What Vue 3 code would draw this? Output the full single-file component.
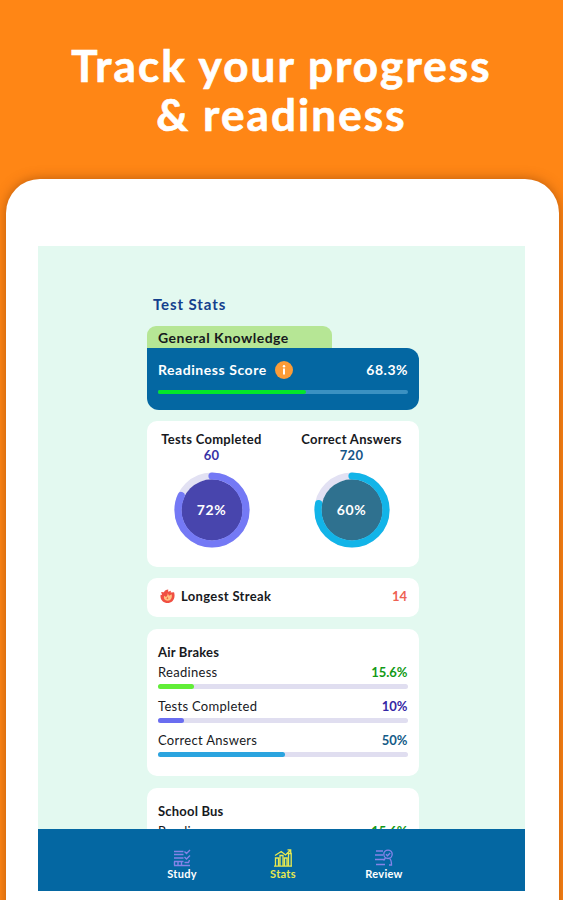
<template>
  <div class="page">
    <h1 class="headline">Track your progress<br />&amp; readiness</h1>
    <div class="device">
      <div class="screen">
        <main class="content">
          <h2 class="title">Test Stats</h2>
          <div class="tab">General Knowledge</div>
          <section class="score">
            <div class="row score-row">
              <span class="score-label">Readiness Score</span>
              <svg class="info" viewBox="0 0 18 18">
                <circle cx="9" cy="9" r="9" fill="#fb9c38" />
                <circle cx="9" cy="5.2" r="1.2" fill="#fff" />
                <path d="M9 7.6v5.9" stroke="#fff" stroke-width="2" />
              </svg>
              <span class="score-value">68.3%</span>
            </div>
            <div class="track track-score">
              <div class="fill" :style="{ width: '59%', background: '#04e52a' }"></div>
            </div>
          </section>

          <section class="card rings">
            <div v-for="ring in rings" :key="ring.label" class="ring">
              <span class="ring-label">{{ ring.label }}</span>
              <span class="ring-count" :style="{ color: ring.countColor }">{{ ring.count }}</span>
              <div class="dial">
                <svg viewBox="0 0 76 76">
                  <circle cx="38" cy="38" r="34" fill="none" stroke="#e2e1f3" stroke-width="7" />
                  <circle cx="38" cy="38" r="30.7" :fill="ring.inner" />
                  <circle
                    cx="38" cy="38" r="34" fill="none" pathLength="100"
                    :stroke="ring.outer" stroke-width="7.2" stroke-linecap="round"
                    :stroke-dasharray="ring.arc + ' 100'" transform="rotate(-90 38 38)"
                  />
                </svg>
                <span class="dial-text">{{ ring.percent }}</span>
              </div>
            </div>
          </section>

          <section class="card streak">
            <svg class="flame" viewBox="0 0 16 16">
              <path d="M1.2 3.2 4.2 3.4C5 1.8 6.6.8 8.8.6L8.6 3l3-1.2-.2 1.9 3.6-.3c1.2 4.2.3 7.6-1.8 9.6-2.8 2.6-7.6 2.6-10.4 0C.8 11.100.1 8.500.7 6l1.500.3z" fill="#f04f42" />
              <path d="M8.200 4.300 9.600 7.200 12.400 5.600c1 3.800-.8 6.900-4.200 6.900-3.200 0-4.700-2.500-3.700-5.300l1.800 1.300C7.700 7.700 8.300 6 8.200 4.300z" fill="#ffc07f" />
              <path d="m8 8 .9 2.100c-.2 1-1.500 1.200-2 .4z" fill="#f36a45" />
            </svg>
            <span class="streak-label">Longest Streak</span>
            <span class="streak-value">14</span>
          </section>

          <section v-for="topic in topics" :key="topic.name" class="card topic">
            <h3 class="topic-name">{{ topic.name }}</h3>
            <div v-for="item in topic.items" :key="item.label" class="metric">
              <div class="row metric-row">
                <span class="metric-label">{{ item.label }}</span>
                <span class="metric-value" :style="{ color: item.color }">{{ item.value }}</span>
              </div>
              <div class="track">
                <div class="fill" :style="{ width: item.width + '%', background: item.bar }"></div>
              </div>
            </div>
          </section>
        </main>

        <nav class="nav">
          <a class="nav-item">
            <svg viewBox="0 0 18 18" fill="none" stroke="#8583e8" stroke-width="1.4">
              <path d="M1 2.500h9.500M1 5.500h9.500M1 9h9.500M1 12.500h9.500M1 16.500h16M1.500 12.500v4M5 12.500v4M8.500 12.500v4M11.500 2.500l2 2L17 1M11.500 8l2 2L17 6.500M11.500 13.500h4l1-2.500" />
            </svg>
            <span>Study</span>
          </a>
          <a class="nav-item active">
            <svg viewBox="0 0 18 18" fill="none" stroke="#e9e94f" stroke-width="1.3">
              <path d="M0 17.2h18M1.5 17V9h3v8M6 17V6.5h3V17M10.5 17V9h2.5v8M14.5 17V4.5h2.7V17M1 6.5 7.2 2.5 11.5 6 16.5 1M13.5.8h3.2v3" />
            </svg>
            <span>Stats</span>
          </a>
          <a class="nav-item">
            <svg viewBox="0 0 18 18" fill="none" stroke="#8583e8" stroke-width="1.3">
              <path d="M1 2h7M0 6h8M0 10.5h10M1 15.500h9M10.500 9 8.500 11.500M14.500 9.500c1.500 1 2 2.500 2 6.500h-2.500" />
              <circle cx="13" cy="5.300" r="4.200" />
              <path d="m11 5.200 1.500 1.600L15.200 4" />
            </svg>
            <span>Review</span>
          </a>
        </nav>
      </div>
    </div>
  </div>
</template>

<script setup>
const rings = [
  { label: 'Tests Completed', count: 60, percent: '72%', arc: 82, outer: '#7479f5', inner: '#4845ad', countColor: '#3731a5' },
  { label: 'Correct Answers', count: 720, percent: '60%', arc: 78, outer: '#12b4e8', inner: '#2f718f', countColor: '#165587' }
];

const metrics = [
  { label: 'Readiness', value: '15.6%', width: 14.5, color: '#129a16', bar: '#61ee37' },
  { label: 'Tests Completed', value: '10%', width: 10.3, color: '#3527a5', bar: '#6a6df0' },
  { label: 'Correct Answers', value: '50%', width: 51, color: '#145b87', bar: '#2ba4df' }
];

const topics = [
  { name: 'Air Brakes', items: metrics },
  { name: 'School Bus', items: metrics.slice(0, 1) }
];
</script>

<style>
body {
  margin: 0;
}
</style>

<style scoped>
.page {
  height: 900px;
  overflow: hidden;
  background: #ff8615;
  font-family: Lato, "Open Sans", sans-serif;
  color: #17191d;
}

.headline {
  margin: 0;
  height: 138px;
  padding-top: 41px;
  text-align: center;
  font-size: 44px;
  line-height: 49px;
  font-weight: 700;
  letter-spacing: 2.1px;
  color: #fff;
  -webkit-text-stroke: 0.7px #fff;
}

.device {
  box-sizing: border-box;
  height: 760px;
  margin: 0 4px 0 5.5px;
  padding: 67px 34px 0 32.5px;
  border-radius: 34px 34px 0 0;
  background: #fff;
  box-shadow: 0 0 12px rgba(120, 50, 0, 0.5);
}

.screen {
  display: flex;
  flex-direction: column;
  height: 645px;
  overflow: hidden;
  background: #e3f9f0;
}

.content {
  flex: 1;
  min-height: 0;
  overflow: hidden;
  width: 272px;
  padding: 47px 0 0 109px;
}

.title {
  margin: 0 0 10.5px 6px;
  font-size: 15px;
  line-height: 22px;
  font-weight: 700;
  letter-spacing: 0.9px;
  color: #13408d;
}

.tab {
  box-sizing: border-box;
  width: 185px;
  height: 22.5px;
  padding-left: 11px;
  border-radius: 9px 9px 0 0;
  background: #b6e695;
  font-size: 14px;
  line-height: 24px;
  font-weight: 700;
  letter-spacing: 0.5px;
}

.score {
  box-sizing: border-box;
  height: 62px;
  margin-bottom: 11px;
  padding: 12px 11px 0;
  border-radius: 0 12px 12px 12px;
  background: #0467a2;
  color: #fff;
}

.row {
  display: flex;
  align-items: center;
}

.score-row {
  height: 19px;
  font-size: 14px;
  font-weight: 700;
}

.score-label {
  letter-spacing: 0.55px;
}

.info {
  width: 18px;
  height: 18px;
  margin-left: 8.5px;
}

.score-value {
  margin-left: auto;
  letter-spacing: 0.5px;
}

.track {
  height: 4.5px;
  border-radius: 3px;
  background: #e0def0;
}

.track-score {
  height: 4px;
  margin-top: 11px;
  background: #3b91c2;
}

.fill {
  height: 100%;
  border-radius: 3px;
}

.card {
  box-sizing: border-box;
  border-radius: 10px;
  background: #fff;
}

.rings {
  display: flex;
  justify-content: space-between;
  height: 145.5px;
  margin-bottom: 11.5px;
  padding: 10px 12px 0 9px;
}

.ring {
  display: flex;
  flex-direction: column;
  align-items: center;
  width: 111px;
}

.ring-label {
  font-size: 13px;
  line-height: 16px;
  font-weight: 700;
  letter-spacing: 0.3px;
  white-space: nowrap;
}

.ring-count {
  font-size: 13px;
  line-height: 16px;
  font-weight: 700;
  letter-spacing: 0.3px;
}

.dial {
  display: grid;
  place-items: center;
  margin-top: 9px;
}

.dial svg,
.dial-text {
  grid-area: 1 / 1;
}

.dial svg {
  width: 76px;
  height: 76px;
}

.dial-text {
  font-size: 14px;
  line-height: 18px;
  font-weight: 700;
  letter-spacing: 0.6px;
  color: #fff;
}

.streak {
  display: flex;
  align-items: center;
  height: 38.5px;
  margin-bottom: 12.5px;
  padding: 0 12px 2px 13px;
  font-size: 13px;
  font-weight: 700;
}

.flame {
  width: 15px;
  height: 15px;
  margin-right: 6px;
}

.streak-label {
  letter-spacing: 0.35px;
}

.streak-value {
  margin-left: auto;
  color: #ee6253;
}

.topic {
  height: 146.5px;
  margin-bottom: 12.5px;
  padding: 13.5px 11.5px 0 11px;
}

.topic-name {
  margin: 0;
  font-size: 13px;
  line-height: 18px;
  font-weight: 700;
  letter-spacing: 0.2px;
}

.metric {
  height: 34px;
}

.metric-row {
  justify-content: space-between;
  box-sizing: border-box;
  height: 23.5px;
  padding-bottom: 1.5px;
  font-size: 13px;
}

.metric-label {
  letter-spacing: 0.3px;
}

.metric-value {
  font-weight: 700;
}

.nav {
  display: flex;
  flex: none;
  justify-content: space-between;
  box-sizing: border-box;
  height: 62px;
  padding: 20px 111px 0 114px;
  background: #0467a2;
}

.nav-item {
  display: flex;
  flex-direction: column;
  align-items: center;
  width: 60px;
  font-size: 11px;
  line-height: 14px;
  font-weight: 700;
  letter-spacing: 0.3px;
  color: #fff;
}

.nav-item svg {
  width: 18px;
  height: 18px;
}

.active {
  color: #e9e94f;
}
</style>
